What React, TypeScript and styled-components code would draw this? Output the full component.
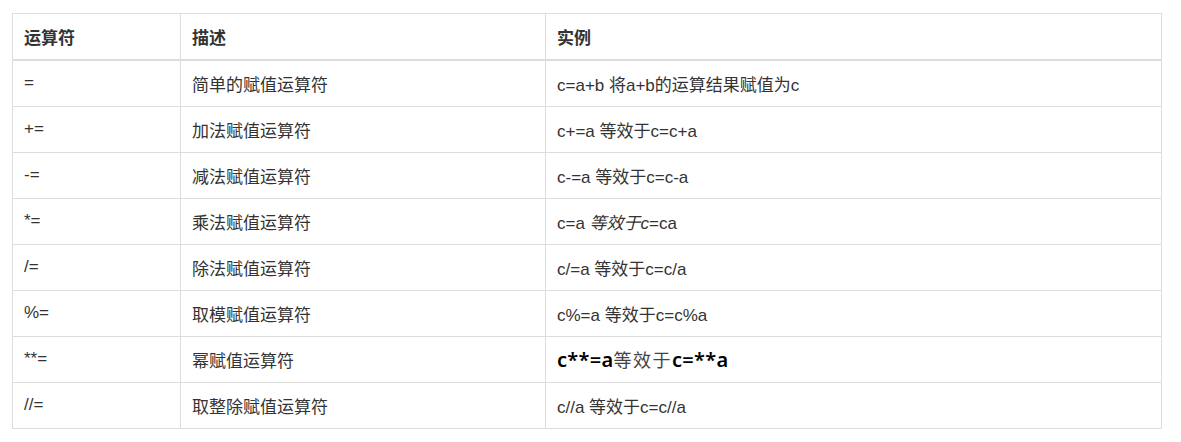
import React from "react";
import styled, { createGlobalStyle } from "styled-components";

const Global = createGlobalStyle`
  html, body { margin: 0; padding: 0; background: #fff; }
  body { font-family: "Liberation Sans", "Noto Sans CJK SC", sans-serif; }
`;

const Page = styled.div`
  padding: 13px 19px 0 12px;
`;

const Table = styled.table`
  width: 1150px;
  border-collapse: collapse;
  table-layout: fixed;
  font-family: "Liberation Sans", "Noto Sans CJK SC", sans-serif;
  font-size: 17px;
  color: #333;
  border: 1px solid #ddd;
`;

const Th = styled.th<{ $w?: number }>`
  box-sizing: border-box;
  ${(p) => (p.$w ? `width: ${p.$w}px;` : "")}
  height: 46px;
  padding: 0 11px;
  text-align: left;
  font-weight: bold;
  border: 1px solid #ddd;
  border-bottom: 2px solid #ddd;
  vertical-align: middle;
`;

const Td = styled.td`
  height: 45px;
  padding: 0 11px;
  border: 1px solid #ddd;
  vertical-align: middle;
  white-space: nowrap;
`;

const Em = styled.em`
  font-style: italic;
`;

const Strong = styled.span`
  font-family: "Noto Sans", "Noto Sans CJK SC", sans-serif;
  font-size: 20px;
  font-weight: 600;
  color: #000;
  letter-spacing: 0.3px;
`;

const Light = styled.span`
  font-size: 18px;
  color: #444;
  letter-spacing: 1.5px;
`;

type Row = { op: string; desc: string; ex: React.ReactNode };

const rows: Row[] = [
  { op: "=", desc: "简单的赋值运算符", ex: "c=a+b 将a+b的运算结果赋值为c" },
  { op: "+=", desc: "加法赋值运算符", ex: "c+=a 等效于c=c+a" },
  { op: "-=", desc: "减法赋值运算符", ex: "c-=a 等效于c=c-a" },
  {
    op: "*=",
    desc: "乘法赋值运算符",
    ex: (
      <>
        c=a <Em>等效于c</Em>=ca
      </>
    ),
  },
  { op: "/=", desc: "除法赋值运算符", ex: "c/=a 等效于c=c/a" },
  { op: "%=", desc: "取模赋值运算符", ex: "c%=a 等效于c=c%a" },
  {
    op: "**=",
    desc: "幂赋值运算符",
    ex: (
      <>
        <Strong>c**=a</Strong>
        <Light>等效于</Light>
        <Strong>c=**a</Strong>
      </>
    ),
  },
  { op: "//=", desc: "取整除赋值运算符", ex: "c//a 等效于c=c//a" },
];

export default function App() {
  return (
    <Page>
      <Global />
      <Table>
        <thead>
          <tr>
            <Th $w={168}>运算符</Th>
            <Th $w={365}>描述</Th>
            <Th>实例</Th>
          </tr>
        </thead>
        <tbody>
          {rows.map((r) => (
            <tr key={r.op}>
              <Td>{r.op}</Td>
              <Td>{r.desc}</Td>
              <Td>{r.ex}</Td>
            </tr>
          ))}
        </tbody>
      </Table>
    </Page>
  );
}
